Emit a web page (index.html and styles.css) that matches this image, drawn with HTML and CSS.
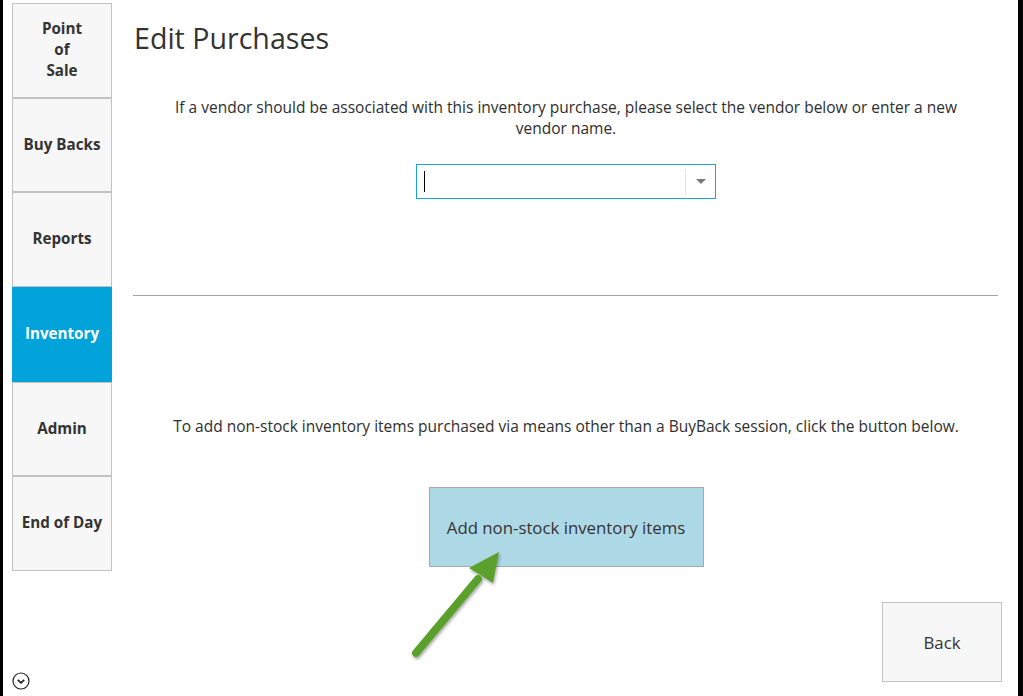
FILE: index.html
```html
<!DOCTYPE html>
<html>
<head>
<meta charset="utf-8">
<link rel="stylesheet" href="styles.css">
</head>
<body>
<div class="frame">
  <nav class="sidebar">
    <div class="nav-btn">Point<br>of<br>Sale</div>
    <div class="nav-btn">Buy Backs</div>
    <div class="nav-btn">Reports</div>
    <div class="nav-btn active">Inventory</div>
    <div class="nav-btn">Admin</div>
    <div class="nav-btn">End of Day</div>
    <div class="expander">
      <svg width="18" height="18" viewBox="0 0 18 18"><circle cx="9" cy="9" r="8" fill="none" stroke="#222" stroke-width="1.2"/><path d="M5.8 7.8 L9 10.8 L12.2 7.8" fill="none" stroke="#222" stroke-width="1.8"/></svg>
    </div>
  </nav>
  <main class="content">
    <h1 class="title">Edit Purchases</h1>
    <p class="intro">If a vendor should be associated with this inventory purchase, please select the vendor below or enter a new vendor name.</p>
    <div class="combo">
      <span class="caret"></span>
      <span class="combo-sep"></span>
      <span class="combo-arrow"></span>
    </div>
    <hr class="divider">
    <p class="hint">To add non-stock inventory items purchased via means other than a BuyBack session, click the button below.</p>
    <div class="action-row">
      <div class="action-btn">Add non-stock inventory items</div>
    </div>
    <div class="back-row">
      <div class="back-btn">Back</div>
    </div>
  </main>
  <svg class="annotation" width="120" height="130" viewBox="0 0 120 130">
    <defs>
      <filter id="sh" x="-30%" y="-30%" width="160%" height="160%">
        <feDropShadow dx="1" dy="2" stdDeviation="1.5" flood-color="#000" flood-opacity="0.35"/>
      </filter>
    </defs>
    <g filter="url(#sh)">
      <line x1="16" y1="107" x2="78" y2="33" stroke="#5aa02c" stroke-width="8" stroke-linecap="round"/>
      <polygon points="99,6 69,22 93,37" fill="#5aa02c"/>
    </g>
  </svg>
</div>
</body>
</html>
```
FILE: styles.css
```css
html, body {
  margin: 0;
  padding: 0;
  background: #000;
}
.frame {
  position: relative;
  box-sizing: border-box;
  width: 1023px;
  height: 696px;
  margin: 0;
  border-left: 3px solid #000;
  border-right: 5px solid #000;
  background: #fff;
  display: flex;
  font-family: "Open Sans", "Noto Sans", sans-serif;
  color: #2e2e2e;
}
.sidebar {
  width: 100px;
  margin-left: 9px;
  padding-top: 3px;
  display: flex;
  flex-direction: column;
}
.nav-btn {
  box-sizing: border-box;
  height: 94.7px;
  background: #f7f7f7;
  border: 1px solid #c2c2c2;
  display: flex;
  align-items: center;
  justify-content: center;
  text-align: center;
  font-weight: 700;
  font-size: 15.2px;
  line-height: 21px;
  color: #333;
  padding-bottom: 2px;
}
.nav-btn.active {
  background: #01a3da;
  border-color: #01a3da;
  color: #fff;
}
.expander {
  margin-top: auto;
  margin-bottom: 6px;
  height: 18px;
}
.expander svg {
  display: block;
}
.content {
  width: 864px;
  margin-left: 22px;
  display: flex;
  flex-direction: column;
}
.title {
  margin: 21px 0 0 0;
  font-size: 28.6px;
  line-height: 34px;
  font-weight: 400;
  color: #333;
}
.intro {
  margin: 42px auto 0;
  width: 810px;
  text-align: center;
  font-size: 15.5px;
  line-height: 21px;
}
.combo {
  box-sizing: border-box;
  align-self: center;
  margin-top: 25px;
  width: 300px;
  height: 35px;
  border: 1px solid #19a5d8;
  display: flex;
  align-items: center;
  position: relative;
}
.caret {
  width: 1px;
  height: 21px;
  background: #000;
  margin-left: 7px;
}
.combo-sep {
  margin-left: auto;
  width: 1px;
  height: 25px;
  background: #e3e3e3;
}
.combo-arrow {
  margin: 0 9px 0 10px;
  width: 0;
  height: 0;
  border-left: 5px solid transparent;
  border-right: 5px solid transparent;
  border-top: 5px solid #7a7a7a;
}
.divider {
  margin: 96px 0 0 -1px;
  border: 0;
  height: 1px;
  background: #a6a6a6;
}
.hint {
  margin: 120px 0 0 0;
  text-align: center;
  font-size: 15.5px;
  line-height: 21px;
}
.action-row {
  display: flex;
  justify-content: center;
  margin-top: 50px;
}
.action-btn {
  box-sizing: border-box;
  width: 275px;
  height: 80px;
  background: #add8e6;
  border: 1px solid #a9a9a9;
  display: flex;
  align-items: center;
  justify-content: center;
  font-size: 16.8px;
  color: #333;
}
.back-row {
  display: flex;
  justify-content: flex-end;
  margin-top: 35px;
  margin-right: -4px;
}
.back-btn {
  box-sizing: border-box;
  width: 120px;
  height: 80px;
  background: #f7f7f7;
  border: 1px solid #c2c2c2;
  display: flex;
  align-items: center;
  justify-content: center;
  font-size: 16.8px;
  color: #333;
}
.annotation {
  position: absolute;
  left: 397px;
  top: 546px;
  overflow: visible;
}
```
